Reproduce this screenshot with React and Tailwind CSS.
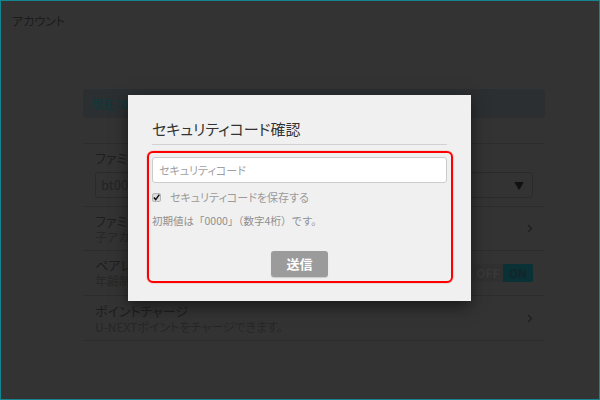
import React from 'react';

// Account page dimmed behind the security-code confirmation modal
const Chevron = () => (
  <svg width="6" height="9" viewBox="0 0 6 9" className="shrink-0">
    <path d="M1 1l3.5 3.5L1 8" fill="none" stroke="#1f1f1f" strokeWidth="1.4" />
  </svg>
);

const SecurityModal = () => (
  <div className="absolute left-[127px] top-[94px] w-[343px] h-[206px] bg-[#f0f0f0] shadow-[0_5px_15px_rgba(0,0,0,0.5)] px-[24px] pt-[23px]">
    <div className="text-[15px] leading-[22px] text-[#333]">セキュリティコード確認</div>
    <div className="mt-[4px] border-t border-[#d2d2d2]" />
    <div className="mt-[12px] h-[26px] bg-white border border-[#cccccc] rounded-[3px] flex items-center px-[6px] text-[11px] text-[#a0a0a0]">
      セキュリティコード
    </div>
    <div className="mt-[5px] h-[18px] flex items-center">
      <span className="w-[9px] h-[9px] rounded-[2px] bg-[#dcdcdc] border border-[#b5b5b5] flex items-center justify-center">
        <svg width="7" height="7" viewBox="0 0 7 7">
          <path d="M0.8 3.6l1.9 2 3.6-5" fill="none" stroke="#111" strokeWidth="1.5" />
        </svg>
      </span>
      <span className="ml-[9px] text-[11px] text-[#9a9a9a]">セキュリティコードを保存する</span>
    </div>
    <div className="mt-[7px] text-[10.5px] leading-[16px] text-[#8f8f8f] [font-feature-settings:normal]">初期値は「0000」（数字4桁）です。</div>
    <div className="mt-[22px] flex justify-center">
      <div className="w-[57px] h-[26px] rounded-[3px] bg-[#9b9b9b] shadow-[0_1px_1px_rgba(0,0,0,0.15)] flex items-center justify-center text-[13px] font-bold text-white">
        送信
      </div>
    </div>
    <div className="absolute left-[19px] top-[56px] w-[306px] h-[132px] border-2 border-[#ff0000] rounded-[6px] shadow-[0_0_1px_#ff0000]" />
  </div>
);

export default function App() {
  return (
    <div className="relative w-[600px] h-[400px] overflow-hidden border border-[#13868f] bg-[#333333] font-['Noto_Sans_CJK_JP',sans-serif] [font-feature-settings:'palt']">
      <div className="pl-[11px] pt-[11px] text-[12px] leading-[18px] text-[#1c1c1c]">アカウント</div>

      <div className="ml-[82px] mt-[59px] w-[462px]">
        <div className="h-[29px] rounded-[3px] bg-[#2c2f31] flex items-center px-[8px] text-[12px] text-[#0b3a3e]">
          現在：0ポイント
        </div>

        <div className="mt-[25px] border-t border-[#2c2c2c]">
          <div className="h-[62px] px-[12px] pt-[6px]">
            <div className="text-[13px] leading-[16px] text-[#1e1e1e]">ファミリーアカウント</div>
            <div className="mt-[6px] h-[26px] border border-[#2a2a2a] rounded-[3px] flex items-center justify-between px-[5px] text-[13px] text-[#242424]">
              <span>bt0070000</span>
              <span className="text-[10px] text-[#111] mr-[3px]">▼</span>
            </div>
          </div>

          <div className="h-[44px] border-t border-[#2c2c2c] px-[12px] flex items-center justify-between">
            <div>
              <div className="text-[13px] leading-[16px] text-[#1e1e1e]">ファミリーアカウント管理</div>
              <div className="text-[12px] leading-[16px] text-[#272727]">子アカウントの追加・削除ができます。</div>
            </div>
            <Chevron />
          </div>

          <div className="h-[45px] border-t border-[#2c2c2c] px-[12px] flex items-center justify-between">
            <div>
              <div className="text-[13px] leading-[16px] text-[#1e1e1e]">ペアレンタルロック</div>
              <div className="text-[12px] leading-[16px] text-[#272727]">年齢制限のある作品を制限します。</div>
            </div>
            <div className="flex h-[18px] rounded-[2px] overflow-hidden text-[12px] font-bold leading-[18px]">
              <span className="w-[30px] text-center bg-[#303030] text-[#383838]">OFF</span>
              <span className="w-[30px] text-center bg-[#093136] text-[#13262a]">ON</span>
            </div>
          </div>

          <div className="h-[46px] border-t border-b border-[#2c2c2c] px-[12px] flex items-center justify-between">
            <div>
              <div className="text-[13px] leading-[17px] text-[#1e1e1e]">ポイントチャージ</div>
              <div className="text-[12px] leading-[16px] text-[#272727]">U-NEXTポイントをチャージできます。</div>
            </div>
            <Chevron />
          </div>
        </div>
      </div>

      <SecurityModal />
    </div>
  );
}
